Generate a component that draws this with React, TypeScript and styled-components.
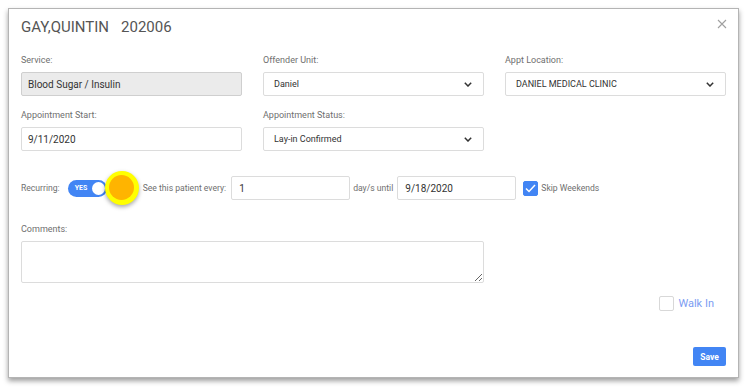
import React from "react";
import styled, { createGlobalStyle } from "styled-components";

const Global = createGlobalStyle`
  html, body { margin: 0; padding: 0; background: #ffffff; }
  body { font-family: Roboto, "Liberation Sans", Arial, sans-serif; }
  * { box-sizing: border-box; }
`;

const Page = styled.div`
  padding: 8px 0 0 8px;
  width: 749px;
  height: 392px;
  overflow: hidden;
`;

const Modal = styled.div`
  position: relative;
  width: 731px;
  height: 370px;
  background: #fff;
  border: 1px solid #b4b4b4;
  box-shadow: 0 3px 5px rgba(0, 0, 0, 0.38);
  padding: 8px 12px 0 12px;
  display: flex;
  flex-direction: column;
`;

const Header = styled.div`
  display: flex;
  align-items: center;
  justify-content: space-between;
  height: 20px;
`;

const Title = styled.h1`
  margin: 0;
  font-weight: 400;
  font-size: 15px;
  line-height: 20px;
  color: #555;
`;

const Id = styled.span`
  margin-left: 12px;
`;

const Close = styled.button`
  position: absolute;
  top: 9px;
  right: 10px;
  width: 12px;
  height: 12px;
  padding: 0;
  border: 0;
  background: none;
  display: flex;
  align-items: center;
  justify-content: center;
`;

const Grid = styled.div`
  display: grid;
  grid-template-columns: repeat(3, 221px);
  column-gap: 21px;
  row-gap: 13px;
  margin-top: 17px;
`;

const Field = styled.div`
  display: flex;
  flex-direction: column;
`;

const Label = styled.label`
  font-size: 9px;
  line-height: 12px;
  color: #6f6f6f;
  margin-bottom: 6px;
`;

const Input = styled.div<{ $disabled?: boolean }>`
  height: 24px;
  border: 1px solid ${(p) => (p.$disabled ? "#cfcfcf" : "#dcdcdc")};
  border-radius: 2px;
  background: ${(p) => (p.$disabled ? "#ebebeb" : "#fff")};
  font-size: 10px;
  color: #333;
  padding: 0 6px;
  display: flex;
  align-items: center;
`;

const Select = styled.div`
  height: 24px;
  border: 1px solid #dcdcdc;
  border-radius: 2px;
  background: #fff;
  font-size: 9px;
  color: #333;
  padding: 0 11px 0 10px;
  display: flex;
  align-items: center;
  justify-content: space-between;
`;

const Chevron = () => (
  <svg width="8" height="5" viewBox="0 0 8 5">
    <path d="M0.8 0.8 L4 4 L7.2 0.8" fill="none" stroke="#333" strokeWidth="1.5" />
  </svg>
);

const RecurRow = styled.div`
  display: flex;
  align-items: center;
  height: 24px;
  margin-top: 25px;
`;

const InlineText = styled.span<{ $ml?: number }>`
  font-size: 8.6px;
  color: #6f6f6f;
  margin-left: ${(p) => p.$ml ?? 0}px;
  white-space: nowrap;
`;

const ToggleWrap = styled.div`
  position: relative;
  margin-left: 8px;
  width: 39px;
  height: 17px;
`;

const Toggle = styled.div`
  width: 39px;
  height: 17px;
  border-radius: 9px;
  background: #4285f4;
  display: flex;
  align-items: center;
  justify-content: space-between;
  padding: 0 2px 0 7px;
`;

const ToggleText = styled.span`
  font-size: 7px;
  font-weight: 700;
  color: #fff;
`;

const Knob = styled.span`
  width: 13px;
  height: 13px;
  border-radius: 50%;
  background: #fff;
`;

const Highlight = styled.div`
  position: absolute;
  left: 37px;
  top: -9px;
  width: 34px;
  height: 34px;
  border-radius: 50%;
  background: #ffff00;
  box-shadow: 0 2px 4px rgba(0, 0, 0, 0.35);
  display: flex;
  align-items: center;
  justify-content: center;
`;

const HighlightCore = styled.div`
  width: 25px;
  height: 25px;
  border-radius: 50%;
  background: #ffb400;
`;

const SmallInput = styled(Input)<{ $ml: number }>`
  width: 119px;
  margin-left: ${(p) => p.$ml}px;
  padding-left: 7px;
`;

const Check = styled.span<{ $checked?: boolean; $ml?: number }>`
  width: 15px;
  height: 15px;
  border-radius: 2px;
  margin-left: ${(p) => p.$ml ?? 0}px;
  background: ${(p) => (p.$checked ? "#4285f4" : "#fff")};
  border: 1px solid ${(p) => (p.$checked ? "#4285f4" : "#d8d8d8")};
  display: flex;
  align-items: center;
  justify-content: center;
  flex: none;
`;

const CommentsField = styled.div`
  display: flex;
  flex-direction: column;
  width: 463px;
  margin-top: 23px;
`;

const TextArea = styled.textarea`
  height: 42px;
  border: 1px solid #dcdcdc;
  border-radius: 2px;
  resize: vertical;
  font-family: inherit;
  font-size: 10px;
  padding: 4px 6px;
  outline: none;
`;

const WalkInRow = styled.div`
  display: flex;
  justify-content: flex-end;
  align-items: center;
  margin-top: 13px;
  padding-right: 12px;
  height: 15px;
`;

const WalkInText = styled.span`
  font-size: 11px;
  color: #7b9cf2;
  margin-left: 4px;
`;

const Footer = styled.div`
  display: flex;
  justify-content: flex-end;
  margin-top: 36px;
`;

const SaveButton = styled.button`
  width: 33px;
  height: 19px;
  border: 0;
  border-radius: 2px;
  background: #4285f4;
  color: #fff;
  font-family: inherit;
  font-weight: 700;
  font-size: 8.5px;
  padding: 0;
`;

export default function App() {
  return (
    <>
      <Global />
      <Page>
        <Modal>
          <Header>
            <Title>
              GAY,QUINTIN<Id>202006</Id>
            </Title>
          </Header>
          <Close aria-label="close">
            <svg width="10" height="10" viewBox="0 0 10 10">
              <path d="M1 1 L9 9 M9 1 L1 9" stroke="#a0a0a0" strokeWidth="1.1" />
            </svg>
          </Close>
          <Grid>
            <Field>
              <Label>Service:</Label>
              <Input $disabled>Blood Sugar / Insulin</Input>
            </Field>
            <Field>
              <Label>Offender Unit:</Label>
              <Select>
                Daniel
                <Chevron />
              </Select>
            </Field>
            <Field>
              <Label>Appt Location:</Label>
              <Select>
                DANIEL MEDICAL CLINIC
                <Chevron />
              </Select>
            </Field>
            <Field>
              <Label>Appointment Start:</Label>
              <Input>9/11/2020</Input>
            </Field>
            <Field>
              <Label>Appointment Status:</Label>
              <Select>
                Lay-in Confirmed
                <Chevron />
              </Select>
            </Field>
          </Grid>
          <RecurRow>
            <InlineText>Recurring:</InlineText>
            <ToggleWrap>
              <Toggle>
                <ToggleText>YES</ToggleText>
                <Knob />
              </Toggle>
              <Highlight>
                <HighlightCore />
              </Highlight>
            </ToggleWrap>
            <InlineText $ml={36}>See this patient every:</InlineText>
            <SmallInput $ml={5}>1</SmallInput>
            <InlineText $ml={3}>day/s until</InlineText>
            <SmallInput $ml={4}>9/18/2020</SmallInput>
            <Check $checked $ml={7}>
              <svg width="11" height="9" viewBox="0 0 11 9">
                <path d="M1 4.5 L4 7.5 L10 1" fill="none" stroke="#fff" strokeWidth="1.5" />
              </svg>
            </Check>
            <InlineText $ml={3}>Skip Weekends</InlineText>
          </RecurRow>
          <CommentsField>
            <Label>Comments:</Label>
            <TextArea />
          </CommentsField>
          <WalkInRow>
            <Check />
            <WalkInText>Walk In</WalkInText>
          </WalkInRow>
          <Footer>
            <SaveButton>Save</SaveButton>
          </Footer>
        </Modal>
      </Page>
    </>
  );
}
